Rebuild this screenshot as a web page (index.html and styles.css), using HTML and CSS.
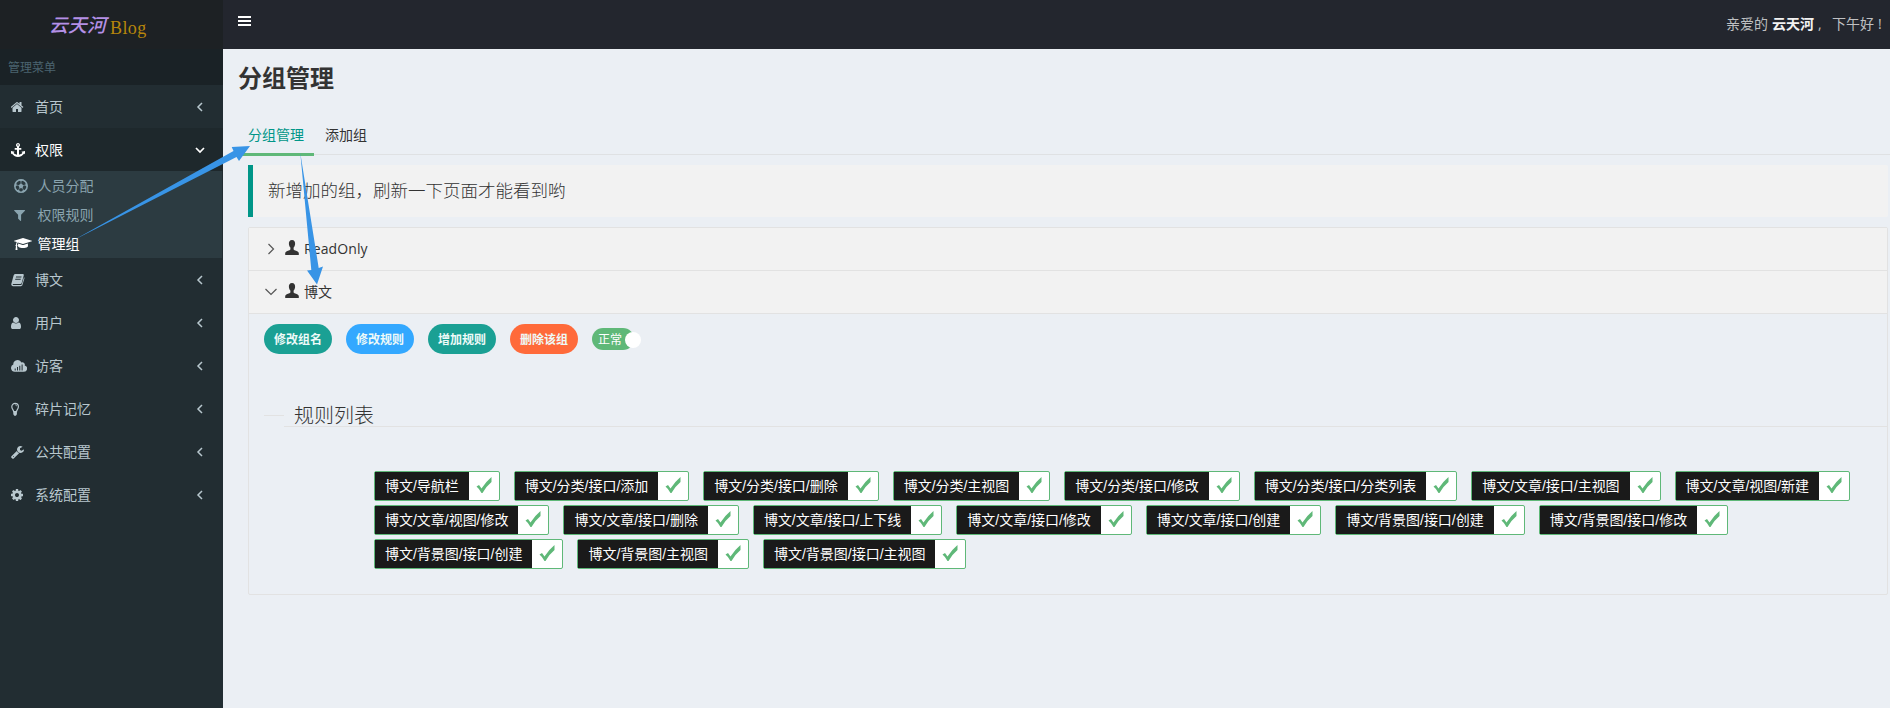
FILE: index.html
```html
<!DOCTYPE html>
<html lang="zh-CN">
<head>
<meta charset="utf-8">
<title>分组管理</title>
<link rel="stylesheet" href="styles.css">
</head>
<body>
<svg class="defs" width="0" height="0">
  <symbol id="left" viewBox="0 0 8 10"><path d="M6 1 2 5l4 4" fill="none" stroke="currentColor" stroke-width="1.5"/></symbol>
  <symbol id="check" viewBox="0 0 16 16"><path d="M.5 9.500 3 8l2.500 3.500Q9.500 5 15.500 0V5Q10 9.500 6.500 16H5.500Q3.500 12 .5 9.500z" fill="currentColor"/></symbol>
  <symbol id="person" viewBox="0 0 14 15"><path d="M7 0c2.300 0 3.300 1.700 3.100 4-.1 1.600-.7 2.700-1.500 3.600v2c.6 1 4.200 1.600 5.200 3.100V15H.2v-2.300c1-1.500 4.600-2.100 5.200-3.100v-2C4.600 6.700 4 5.600 3.900 4 3.700 1.700 4.700 0 7 0z" fill="currentColor"/></symbol>
</svg>
<div class="app">
  <aside class="sidebar">
    <div class="logo"><span class="logo-name">云天河</span><span class="logo-blog">Blog</span></div>
    <div class="menu-title">管理菜单</div>
    <nav>
      <a class="item"><svg class="ico" viewBox="64 0 1792 1792"><path d="M1408 992v480q0 26-19 45t-45 19h-384v-384h-256v384h-384q-26 0-45-19t-19-45v-480q0-1 .5-3t.5-3l575-474 575 474q1 2 1 6zm223-69l-62 74q-8 9-21 11h-3q-13 0-21-7l-692-577-692 577q-12 8-24 7-13-2-21-11l-62-74q-8-10-7-23.500t11-21.500l719-599q32-26 76-26t76 26l244 204v-195q0-14 9-23t23-9h192q14 0 23 9t9 23v408l219 182q10 8 11 21.500t-7 23.500z"/></svg><span>首页</span><svg class="arrow"><use href="#left"/></svg></a>
      <a class="item open"><svg class="ico" viewBox="0 0 14 14"><path fill-rule="evenodd" d="M7 0a2.100 2.100 0 0 1 1 3.900V5h2.300v1.700H8v5c1.700-.3 2.800-1 3.400-1.900l-1-1L14 8v3.300l-.9-.7C11.900 12.500 9.600 14 7 14S2.100 12.500.9 10.600l-.9.7V8l3.600.8-1 1c.6.9 1.700 1.600 3.400 1.900v-5H3.700V5H6V3.900A2.100 2.100 0 0 1 7 0zm0 1.200a.8.8 0 1 0 0 1.600.8.8 0 0 0 0-1.600z"/></svg><span>权限</span><svg class="arrow down" viewBox="0 0 10 8"><path d="M1 2l4 4 4-4" fill="none" stroke="currentColor" stroke-width="1.700"/></svg></a>
      <div class="submenu">
        <a><svg class="ico" viewBox="0 0 14 14"><circle cx="7" cy="7" r="6.200" fill="none" stroke="currentColor" stroke-width="1.500"/><path d="M7 4.500l2.500 1.800-1 2.900H5.500l-1-2.900zM4.200.8L7 2.500 9.800.8 7 .2zM.5 8.300L2.900 6.400 2 3.500.8 5zM13.500 8.300l-2.400-1.900.9-2.900L13.200 5zM2.200 11.200l3-.2 1 2.600-2.200-.4zM11.800 11.200l-3-.2-1 2.600 2.200-.4z"/><path d="M7 2v3M2.500 6l2.300.6M11.500 6l-2.300.6M5.700 9l-1.200 2M8.300 9l1.200 2" stroke="currentColor" stroke-width=".6"/></svg><span>人员分配</span></a>
        <a><svg class="ico" viewBox="180 0 1792 1792"><path d="M1595 295q17 41-14 70l-493 493v742q0 42-39 59-13 5-25 5-27 0-45-19l-256-256q-19-19-19-45v-486l-493-493q-31-29-14-70 17-39 59-39h1280q42 0 59 39z"/></svg><span>权限规则</span></a>
        <a class="current"><svg class="ico cap" viewBox="0 0 2304 1792"><path d="M1774 836l18 316q4 69-82 128t-235 93.500-323 34.500-323-34.500-235-93.500-82-128l18-316 574 181q22 7 48 7t48-7zm530-324q0 23-22 31l-1120 352q-4 1-10 1t-10-1l-652-206q-43 34-71 111.500t-34 178.500q63 36 63 109 0 69-58 107l58 433q2 14-8 25-9 11-24 11h-192q-15 0-24-11-10-11-8-25l58-433q-58-38-58-107 0-73 65-111 11-207 98-330l-333-104q-22-8-22-31t22-31l1120-352q4-1 10-1t10 1l1120 352q22 8 22 31z"/></svg><span>管理组</span></a>
      </div>
      <a class="item"><svg class="ico" viewBox="0 0 14 14"><path fill-rule="evenodd" d="M4.500 1h7.200c.8 0 1.300.6 1.100 1.300L10.700 10c-.2.600-.7 1-1.300 1H2.200c-.7 0-.7.9 0 .9h7.700c.5 0 .8-.2.9-.6L13 4.200c.5.300.6.700.4 1.300l-2 6.600c-.2.600-.8 1.100-1.500 1.100H2.100C.9 13.200 0 12.200.3 11L2.600 2.600C2.800 1.600 3.500 1 4.500 1zm.6 2.600l-.3.900h5.500l.3-.9zm-.7 2.200l-.3.900h5.500l.3-.9z"/></svg><span>博文</span><svg class="arrow"><use href="#left"/></svg></a>
      <a class="item"><svg class="ico" viewBox="256 0 1792 1792"><path d="M1536 1399q0 109-62.500 187t-150.500 78h-854q-88 0-150.500-78t-62.500-187q0-85 8.500-160.500t31.500-152 58.500-131 94-89 134.500-34.500q131 128 313 128t313-128q76 0 134.500 34.500t94 89 58.500 131 31.500 152 8.500 160.500zm-256-887q0 159-112.500 271.500t-271.500 112.500-271.500-112.500-112.500-271.500 112.500-271.500 271.500-112.500 271.500 112.500 112.500 271.500z"/></svg><span>用户</span><svg class="arrow"><use href="#left"/></svg></a>
      <a class="item"><svg class="ico cloud" viewBox="0 0 16 14"><path fill-rule="evenodd" d="M3.700 12.700A3.700 3.700 0 0 1 2.300 5.600 4.300 4.300 0 0 1 10.500 3.600a2.300 2.300 0 0 1 3.200 2.800A3.200 3.200 0 0 1 12.800 12.700zM3.700 9.500v2h1v-2zM6 8v3.500h1V8zM8.300 6.800v4.700h1V6.800zM10.600 5.500v6h1v-6z"/></svg><span>访客</span><svg class="arrow"><use href="#left"/></svg></a>
      <a class="item"><svg class="ico" viewBox="0 0 14 14"><path d="M2.700 9.600C2.600 7.800.8 7.200.8 4.700a3.300 3.300 0 0 1 6.600 0c0 2.500-1.800 3.100-1.900 4.900z" fill="none" stroke="currentColor" stroke-width="1.200"/><path d="M2.300 9.500h3.600v2.800l-1 1.400H3.300l-1-1.400zM4.100 2.500c1 0 1.800.6 1.800 1.700h-.6c0-.7-.5-1-1.200-1z"/></svg><span>碎片记忆</span><svg class="arrow"><use href="#left"/></svg></a>
      <a class="item"><svg class="ico" viewBox="64 0 1792 1792"><path d="M448 1472q0-26-19-45t-45-19-45 19-19 45 19 45 45 19 45-19 19-45zm644-420l-682 682q-37 37-90 37-52 0-91-37l-106-108q-38-36-38-90 0-53 38-91l681-681q39 98 114.500 173.500t173.500 114.500zm634-435q0 39-23 106-47 134-164.500 217.500t-258.500 83.500q-185 0-316.500-131.500t-131.500-316.500 131.500-316.500 316.500-131.500q58 0 121.500 16.500t107.500 46.500q16 11 16 28t-16 28l-293 169v224l193 107q5-3 79-48.500t135.500-81 70.500-35.500q15 0 23.500 10t8.500 25z"/></svg><span>公共配置</span><svg class="arrow"><use href="#left"/></svg></a>
      <a class="item"><svg class="ico" viewBox="128 0 1792 1792"><path d="M1152 896q0-106-75-181t-181-75-181 75-75 181 75 181 181 75 181-75 75-181zm512-109v222q0 12-8 23t-20 13l-185 28q-19 54-39 91 35 50 107 138 10 12 10 25t-9 23q-27 37-99 108t-94 71q-12 0-26-9l-138-108q-44 23-91 38-16 136-29 186-7 28-36 28h-222q-14 0-24.500-8.500t-11.500-21.500l-28-184q-49-16-90-37l-141 107q-10 9-25 9-14 0-25-11-126-114-165-168-7-10-7-23 0-12 8-23 15-21 51-66.500t54-70.500q-27-50-41-99l-183-27q-13-2-21-12.500t-8-23.500v-222q0-12 8-23t19-13l186-28q14-46 39-92-40-57-107-138-10-12-10-24 0-10 9-23 26-36 98.500-107.500t94.500-71.500q13 0 26 10l138 107q44-23 91-38 16-136 29-186 7-28 36-28h222q14 0 24.500 8.500t11.500 21.500l28 184q49 16 90 37l142-107q9-9 24-9 13 0 25 10 129 119 165 170 7 8 7 22 0 12-8 23-15 21-51 66.500t-54 70.500q26 50 41 98l183 28q13 2 21 12.500t8 23.500z"/></svg><span>系统配置</span><svg class="arrow"><use href="#left"/></svg></a>
    </nav>
  </aside>
  <div class="main">
    <header class="topbar">
      <div class="burger"><i></i><i></i><i></i></div>
      <div class="greeting"><span>亲爱的</span><b>云天河</b><span class="comma">,</span><span>下午好</span><span class="bang">!</span></div>
    </header>
    <main class="page">
      <h1>分组管理</h1>
      <div class="tabs"><a class="tab active">分组管理</a><a class="tab">添加组</a></div>
      <div class="content">
        <blockquote class="notice">新增加的组，刷新一下页面才能看到哟</blockquote>
        <div class="collapse">
          <div class="head"><svg class="fold" viewBox="0 0 14 14"><path d="M4.500 2l5 5-5 5"/></svg><svg class="person"><use href="#person"/></svg><span>ReadOnly</span></div>
          <div class="head"><svg class="fold" viewBox="0 0 14 14"><path d="M1.500 4L7 9.500 12.500 4"/></svg><svg class="person"><use href="#person"/></svg><span>博文</span></div>
          <div class="body">
            <div class="buttons">
              <button class="btn">修改组名</button><button class="btn blue">修改规则</button><button class="btn">增加规则</button><button class="btn red">删除该组</button>
              <div class="switch"><em>正常</em><i></i></div>
            </div>
            <div class="legend"><i></i><h2>规则列表</h2></div>
            <div class="rules">
              <div class="rule"><span>博文/导航栏</span><svg><use href="#check"/></svg></div>
              <div class="rule"><span>博文/分类/接口/添加</span><svg><use href="#check"/></svg></div>
              <div class="rule"><span>博文/分类/接口/删除</span><svg><use href="#check"/></svg></div>
              <div class="rule"><span>博文/分类/主视图</span><svg><use href="#check"/></svg></div>
              <div class="rule"><span>博文/分类/接口/修改</span><svg><use href="#check"/></svg></div>
              <div class="rule"><span>博文/分类/接口/分类列表</span><svg><use href="#check"/></svg></div>
              <div class="rule"><span>博文/文章/接口/主视图</span><svg><use href="#check"/></svg></div>
              <div class="rule"><span>博文/文章/视图/新建</span><svg><use href="#check"/></svg></div>
              <div class="rule"><span>博文/文章/视图/修改</span><svg><use href="#check"/></svg></div>
              <div class="rule"><span>博文/文章/接口/删除</span><svg><use href="#check"/></svg></div>
              <div class="rule"><span>博文/文章/接口/上下线</span><svg><use href="#check"/></svg></div>
              <div class="rule"><span>博文/文章/接口/修改</span><svg><use href="#check"/></svg></div>
              <div class="rule"><span>博文/文章/接口/创建</span><svg><use href="#check"/></svg></div>
              <div class="rule"><span>博文/背景图/接口/创建</span><svg><use href="#check"/></svg></div>
              <div class="rule"><span>博文/背景图/接口/修改</span><svg><use href="#check"/></svg></div>
              <div class="rule"><span>博文/背景图/接口/创建</span><svg><use href="#check"/></svg></div>
              <div class="rule"><span>博文/背景图/主视图</span><svg><use href="#check"/></svg></div>
              <div class="rule"><span>博文/背景图/接口/主视图</span><svg><use href="#check"/></svg></div>
            </div>
          </div>
        </div>
      </div>
    </main>
  </div>
</div>
<svg class="pointers" viewBox="0 0 1890 708"><path d="M72 241L233.500 151l-1.800-4L250 146l-11 15-2.500-4zM300.300 153L318.700 268l4.300-1.500-6 18L307 270.500l4.300-.5z"/></svg>
</body>
</html>
```
FILE: styles.css
```css
* { box-sizing: border-box; }
body { margin: 0; height: 708px; overflow: hidden; font: 14px/20px "Open Sans", "Noto Sans CJK SC", sans-serif; color: #333; background: #ebeff4; }
svg { display: block; fill: currentColor; }
.defs { position: absolute; }
h1, h2, blockquote { margin: 0; }
.app { display: flex; height: 708px; }

.sidebar { width: 223px; flex: none; background: #222d32; color: #b8c7ce; }
.logo { height: 49px; background: #1d2124; display: flex; align-items: center; padding: 0 0 0 49px; }
.logo-name { font-size: 19px; font-style: italic; font-weight: 500; color: #b490e6; }
.logo-blog { font: 18px/20px "Liberation Serif", serif; letter-spacing: .4px; color: #b8860b; margin: 7px 0 0 4px; }
.menu-title { height: 36px; padding: 1px 8px 0; background: #1a2226; color: #4b646f; font-size: 12px; line-height: 36px; }
.item { display: flex; align-items: center; height: 43px; padding: 0 19px 0 11px; }
.ico { width: 14px; height: 14px; flex: none; }
.item .ico { margin-right: 10px; }
.item .cloud { width: 16px; margin-right: 8px; }
.arrow { width: 8px; height: 10px; margin-left: auto; }
.arrow.down { width: 10px; height: 8px; margin-right: -1px; }
.item.open { background: #1e282c; color: #fff; }
.submenu { background: #2c3b41; height: 87px; margin-right: 1px; color: #8aa4af; }
.submenu a { display: flex; align-items: center; height: 29px; padding-left: 14px; gap: 9.5px; }
.submenu .cap { width: 18px; margin-right: -4px; }
.submenu .current { color: #fff; }

.main { flex: 1; min-width: 0; }
.topbar { height: 49px; background: #23262e; color: #bfc0c2; display: flex; justify-content: space-between; padding: 0 5px 0 15px; }
.burger { display: grid; gap: 2px; align-content: start; padding-top: 16px; }
.burger i { width: 13px; height: 2px; background: #fff; }
.greeting { display: flex; line-height: 48px; }
.greeting b { color: #f2f2f2; margin-left: 4px; }
.comma { width: 18px; padding-left: 4px; }
.bang { width: 11px; padding-left: 4px; }

h1 { font-size: 24px; line-height: 30px; padding: 14px 0 0 15px; }
.tabs { display: flex; gap: 1px; height: 40px; margin: 22px 0 0 15px; border-bottom: 1px solid #dfe1e3; }
.tab { padding: 0 10px; height: 41px; line-height: 40px; }
.active { color: #009688; border-bottom: 3px solid #5fb878; }
.content { padding: 10px 2px 0 25px; }
.notice { height: 52px; border-left: 5px solid #009688; border-radius: 0 2px 2px 0; background: #f2f2f2; padding-left: 15px; font-size: 17.5px; font-weight: 300; line-height: 51px; }
.collapse { margin-top: 10px; height: 368px; border: 1px solid #e2e2e2; border-radius: 2px; }
.head { height: 43px; background: #f2f2f2; border-bottom: 1px solid #e2e2e2; display: flex; align-items: center; padding-left: 15px; }
.head span { letter-spacing: .1px; }
.fold { width: 14px; height: 14px; margin-right: 7px; }
.fold path { fill: none; stroke: #555; stroke-width: 1.2; }
.person { width: 14px; height: 15px; margin: 0 5px 3px 0; }
.body { padding: 10px 15px; }
.buttons { display: flex; gap: 14px; align-items: center; }
.btn { width: 68px; height: 30px; border: 0; border-radius: 15px; padding: 0; background: #1aa094; color: #eefaf8; font: 700 12px/28px "Noto Sans CJK SC", sans-serif; }
.blue { background: #33a8ff; }
.red { background: #ff6a3a; }
.switch { display: flex; align-items: center; width: 42px; height: 22px; border-radius: 11px; background: #5fb878; color: #fff; padding-left: 6px; }
.switch em { font: 12px/20px "Noto Sans CJK SC", sans-serif; flex: none; }
.switch i { width: 16px; height: 16px; flex: none; margin: 2px 0 0 3px; border-radius: 50%; background: #fff; }
.legend { display: flex; margin: 50px -15px 0 0; height: 23px; }
.legend i { width: 20px; height: 1px; background: #e2e2e2; margin-top: 11px; }
.legend h2 { flex: 1; border-bottom: 1px solid #e2e2e2; padding-left: 10px; font-size: 20px; font-weight: 300; line-height: 24px; }
.rules { display: flex; flex-wrap: wrap; gap: 4px 14px; margin: 44px 0 0 110px; font-family: "Liberation Sans", "Noto Sans CJK SC", sans-serif; letter-spacing: -.02px; }
.rule { display: flex; height: 30px; border: 1px solid #5fb878; border-radius: 2px; background: #fff; }
.rule span { background: #1a1a1a; color: #fff; padding: 0 10px; line-height: 28px; }
.rule svg { width: 16px; height: 16px; margin: 5px 7px 0 7px; color: #5fb878; }

.pointers { position: absolute; left: 0; top: 0; width: 1890px; height: 708px; color: #3894e6; pointer-events: none; }
```
